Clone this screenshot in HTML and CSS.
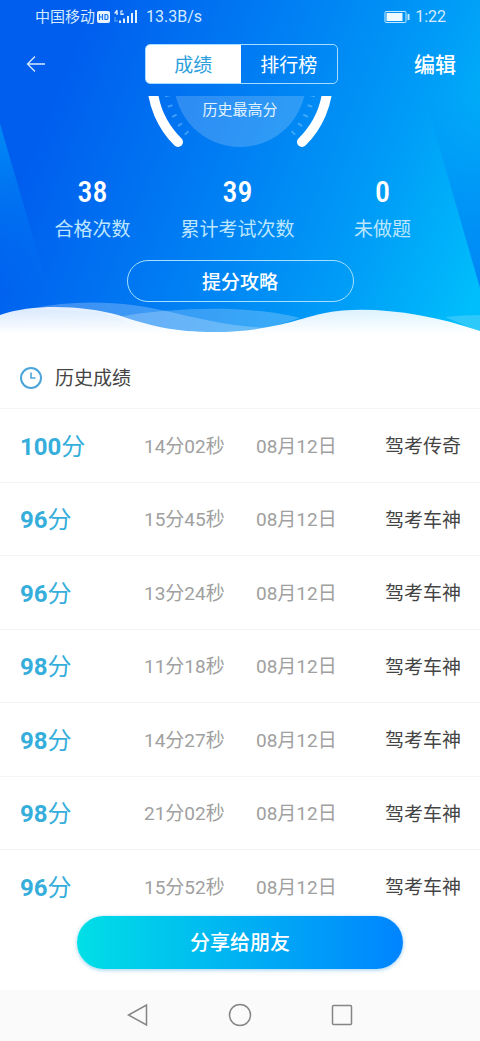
FILE: index.html
```html
<!DOCTYPE html>
<html lang="zh-CN">
<head>
<meta charset="utf-8">
<meta name="viewport" content="width=device-width, initial-scale=1">
<title>历史成绩</title>
<link rel="stylesheet" href="styles.css">
</head>
<body>
<div class="app">
  <section class="hero">
    <svg class="hero-art" viewBox="0 0 480 340" preserveAspectRatio="none" aria-hidden="true">
      <defs>
        <linearGradient id="beamLeft" x1="0" y1="124" x2="30" y2="290" gradientUnits="userSpaceOnUse">
          <stop offset="0" stop-color="#0090f6" stop-opacity=".9"/>
          <stop offset="1" stop-color="#0078f4" stop-opacity="0"/>
        </linearGradient>
        <linearGradient id="beamRight" x1="430" y1="100" x2="480" y2="288" gradientUnits="userSpaceOnUse">
          <stop offset="0" stop-color="#0090f5" stop-opacity="0"/>
          <stop offset=".5" stop-color="#008cf5" stop-opacity=".7"/>
          <stop offset="1" stop-color="#0084f5"/>
        </linearGradient>
        <linearGradient id="foam" x1="0" y1="306" x2="0" y2="334" gradientUnits="userSpaceOnUse">
          <stop offset="0" stop-color="#fff" stop-opacity=".84"/>
          <stop offset="1" stop-color="#fff"/>
        </linearGradient>
      </defs>
      <path d="M0 124L50 295H0Z" fill="url(#beamLeft)"/>
      <path d="M420 80L480 288V80Z" fill="url(#beamRight)"/>
      <path d="M30 309C80 298 130 302 175 313C220 324 250 328 275 328L240 334L150 330L100 312Z" fill="#fff" fill-opacity=".24"/>
      <path d="M118 317C180 306 255 306 300 318L250 334C200 336 160 330 118 317Z" fill="#fff" fill-opacity=".22"/>
      <path d="M445 317Q462 315 480 315V332Z" fill="#fff" fill-opacity=".18"/>
      <path d="M0 315C35 303 85 306 118 315C150 326 175 332 214 332C270 332 300 318 325 313C365 305 425 312 480 331V340H0Z" fill="url(#foam)"/>
    </svg>

    <div class="status">
      <span class="carrier">中国移动</span>
      <svg class="signal" viewBox="0 0 42 16" aria-hidden="true">
        <rect x="1" y="2" width="13" height="12" rx="2" fill="#e8f4ff"/>
        <path d="M3.500 5v6M6.500 5v6M3.500 8h3M9 5.500h1.500q1.500 0 1.500 2.500t-1.500 2.500H9z" fill="none" stroke="#1674ee" stroke-width="1.200"/>
        <path d="M21 1l-2 3h3M21 1v5M27 2h-2v3.500h2V4" fill="none" stroke="#dff0ff" stroke-width="1.200"/>
        <path d="M19 8v5M21 11v2" stroke="#6bb0fa"/>
        <path d="M24 14v-2.500M28 14V9.500M32 14V7M36 14V4M40 14V1" stroke="#dff0ff" stroke-width="2"/>
      </svg>
      <span class="speed">13.3B/s</span>
      <svg class="battery" viewBox="0 0 26 14" aria-hidden="true">
        <rect x="1" y="1.500" width="21" height="11" rx="1" fill="none" stroke="#c4e8ff"/>
        <rect x="2.500" y="3" width="16" height="8" fill="#eefaff"/>
        <path d="M24.500 4v6" stroke="#c4e8ff" stroke-width="2"/>
      </svg>
      <span class="clock">1:22</span>
    </div>

    <header class="bar">
      <button class="back" type="button" aria-label="返回">
        <svg viewBox="0 0 20 18"><path d="M19 9H1.500M9 1.500L1.500 9L9 16.500" fill="none" stroke="#d6eaff" stroke-width="1.300"/></svg>
      </button>
      <nav class="tabs">
        <button class="tab tab-on" type="button">成绩</button>
        <button class="tab" type="button">排行榜</button>
      </nav>
      <button class="edit" type="button">编辑</button>
    </header>

    <div class="gauge">
      <svg class="dial" viewBox="0 0 200 54" aria-hidden="true">
        <circle cx="100" cy="-15" r="66" fill="#fff" fill-opacity=".18"/>
        <g fill="none" stroke="#fff" stroke-width="10" stroke-linecap="round">
          <path d="M12 -15A88 88 0 0 0 38 46M188 -15A88 88 0 0 1 162 46"/>
        </g>
        <g fill="none" stroke="#8fd0ff" stroke-opacity=".45" stroke-width="5" stroke-dasharray="2 8.600">
          <path d="M47.400 37.600A74 74 0 0 1 26 -15"/>
          <path d="M152.600 37.600A74 74 0 0 0 174 -15"/>
        </g>
      </svg>
      <span class="gauge-label">历史最高分</span>
    </div>

    <dl class="stats">
      <div class="stat"><dd>38</dd><dt>合格次数</dt></div>
      <div class="stat"><dd>39</dd><dt>累计考试次数</dt></div>
      <div class="stat"><dd>0</dd><dt>未做题</dt></div>
    </dl>
    <button class="tips" type="button">提分攻略</button>
  </section>

  <main class="history">
    <h2 class="title">
      <svg viewBox="0 0 22 22" aria-hidden="true"><circle cx="11" cy="11" r="10" fill="none" stroke="#4ba5d8" stroke-width="2"/><path d="M11 5.500V11H15.500" fill="none" stroke="#4ba5d8" stroke-width="1.600"/></svg>
      <span>历史成绩</span>
    </h2>
    <table class="records">
      <tbody>
        <tr><th scope="row"><b>100</b>分</th><td>14分02秒</td><td>08月12日</td><td class="rank">驾考传奇</td></tr>
        <tr><th scope="row"><b>96</b>分</th><td>15分45秒</td><td>08月12日</td><td class="rank">驾考车神</td></tr>
        <tr><th scope="row"><b>96</b>分</th><td>13分24秒</td><td>08月12日</td><td class="rank">驾考车神</td></tr>
        <tr><th scope="row"><b>98</b>分</th><td>11分18秒</td><td>08月12日</td><td class="rank">驾考车神</td></tr>
        <tr><th scope="row"><b>98</b>分</th><td>14分27秒</td><td>08月12日</td><td class="rank">驾考车神</td></tr>
        <tr><th scope="row"><b>98</b>分</th><td>21分02秒</td><td>08月12日</td><td class="rank">驾考车神</td></tr>
        <tr><th scope="row"><b>96</b>分</th><td>15分52秒</td><td>08月12日</td><td class="rank">驾考车神</td></tr>
      </tbody>
    </table>
  </main>

  <button class="share" type="button">分享给朋友</button>

  <nav class="system">
    <button type="button" aria-label="返回"><svg viewBox="0 0 24 24"><path d="M20.500 2V22L2.500 12Z"/></svg></button>
    <button type="button" aria-label="主页"><svg viewBox="0 0 24 24"><circle cx="12" cy="12" r="10.500"/></svg></button>
    <button type="button" aria-label="最近任务"><svg viewBox="0 0 24 24"><rect x="2.500" y="2.500" width="19" height="19" rx="1"/></svg></button>
  </nav>
</div>
</body>
</html>
```
FILE: styles.css
```css
* {
  box-sizing: border-box;
}

body {
  margin: 0;
  background: #fff;
  color: #444;
  font: 19px/28px Roboto, "Noto Sans CJK SC", sans-serif;
}

button {
  padding: 0;
  border: 0;
  background: none;
  color: inherit;
  font: inherit;
}

svg {
  display: block;
}

.app {
  display: flex;
  flex-direction: column;
  min-height: 100vh;
}

.hero {
  position: relative;
  display: flex;
  flex-direction: column;
  padding-bottom: 38px;
  background: linear-gradient(112deg, #005eee 15%, #007ef3 47%, #009cf7 74%, #00bdfb 96%);
  color: #fff;
}

.hero > * {
  position: relative;
}

.hero > .hero-art {
  position: absolute;
  inset: 0;
  width: 100%;
  height: 100%;
}

.status {
  display: flex;
  align-items: center;
  height: 34px;
  padding: 0 34px 0 35px;
  color: #d4eaff;
  font-size: 16px;
}

.carrier {
  font-size: 15px;
}

.signal {
  width: 42px;
  height: 16px;
  margin: 0 8px 0 1px;
}

.battery {
  width: 26px;
  height: 14px;
  margin: 0 5px 0 auto;
}

.bar {
  display: grid;
  grid-template-columns: 1fr 193px 1fr;
  align-items: center;
  padding: 10px 24px 0 26px;
}

.back {
  justify-self: start;
}

.back svg {
  width: 20px;
  height: 18px;
}

.edit {
  justify-self: end;
  padding-top: 2px;
  font-size: 21px;
  font-weight: 500;
}

.tabs {
  display: grid;
  grid-template-columns: 1fr 1fr;
  height: 40px;
  overflow: hidden;
  border: 1px solid #a5dcff;
  border-radius: 5px;
}

.tab {
  padding-top: 3px;
}

.tab-on {
  background: #fff;
  color: #2f9fdc;
}

.gauge {
  display: grid;
  justify-items: center;
  margin-top: 12px;
}

.dial,
.gauge-label {
  grid-area: 1 / 1;
}

.dial {
  width: 200px;
  height: 54px;
  overflow: hidden;
}

.gauge-label {
  color: #e4f4ff;
  font-size: 15px;
}

.stats {
  display: grid;
  grid-template-columns: repeat(3, 145px);
  justify-content: center;
  margin: 26px 0 0;
  padding-right: 5px;
  text-align: center;
}

.stat dd {
  margin: 0;
  font: 500 30px/32px "Roboto Condensed", "Liberation Sans Narrow", Roboto, sans-serif;
}

.stat dt {
  margin-top: 8px;
  color: #bce6ff;
}

.tips {
  align-self: center;
  width: 227px;
  height: 42px;
  margin-top: 16px;
  padding-top: 3px;
  border: 1px solid #a5e0ff;
  border-radius: 21px;
  font-weight: 500;
}

.title {
  display: flex;
  align-items: center;
  gap: 13px;
  height: 60px;
  margin: 8px 0 0;
  padding-left: 20px;
  font-size: 19px;
  font-weight: 400;
}

.title svg {
  width: 22px;
  height: 22px;
}

.title span {
  padding-top: 2px;
}

.records {
  width: 100%;
  border-collapse: collapse;
  table-layout: fixed;
}

.records tr {
  height: 73px;
  border-top: 1px solid #f4f4f4;
}

.records tr:nth-child(odd) {
  height: 74px;
}

.records th,
.records td {
  padding: 2px 0 0;
  text-align: left;
  white-space: nowrap;
  font-weight: 400;
}

.records th {
  width: 30%;
  padding-left: 20px;
  color: #36aedb;
  font-size: 24px;
}

.records td {
  color: #a0a0a0;
}

.records .rank {
  padding-top: 3px;
  padding-right: 19px;
  color: #444;
  text-align: right;
}

.share {
  align-self: center;
  width: 68%;
  height: 53px;
  margin: -8px 0 21px;
  padding-top: 2px;
  border-radius: 27px;
  background: linear-gradient(90deg, #00dfe6, #0084ff);
  box-shadow: 0 1px 4px #0084d666;
  color: #fff;
  font-size: 20px;
  font-weight: 500;
  z-index: 1;
}

.system {
  display: flex;
  justify-content: center;
  gap: 78px;
  margin-top: auto;
  padding: 13px 0 14px;
  background: #fafafa;
}

.system svg {
  width: 24px;
  height: 24px;
  fill: none;
  stroke: #858585;
  stroke-width: 1.500;
}
```
